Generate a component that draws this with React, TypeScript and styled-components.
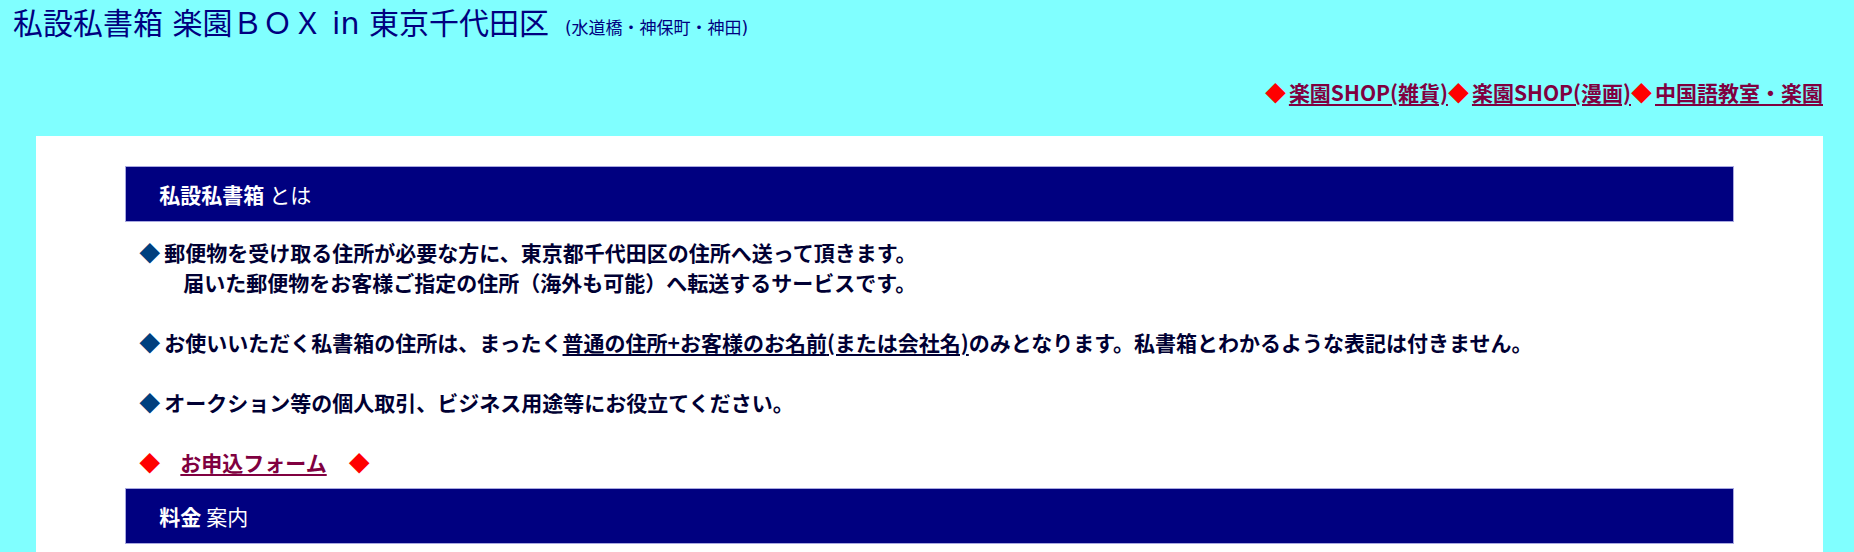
import React from "react";
import styled, { createGlobalStyle } from "styled-components";

const GlobalStyle = createGlobalStyle`
  html, body {
    margin: 0;
    padding: 0;
    background: #80ffff;
  }
  body {
    font-family: "Noto Sans CJK JP", "Noto Sans", sans-serif;
  }
`;

const Page = styled.div`
  width: 1854px;
  padding-top: 2px;
`;

const Title = styled.h1`
  margin: 0;
  padding: 0 0 0 13px;
  height: 44px;
  display: flex;
  align-items: baseline;
  font-family: "DejaVu Sans", "Noto Sans CJK JP", sans-serif;
  font-size: 30px;
  font-weight: 400;
  line-height: 44px;
  color: #000080;
  white-space: nowrap;
`;

const Sub = styled.span`
  font-size: 17px;
  margin-left: 16px;
`;

const Nav = styled.nav`
  display: flex;
  justify-content: flex-end;
  padding: 31px 31px 0 0;
  height: 90px;
  font-size: 21px;
  font-weight: 700;
  line-height: 30px;
  box-sizing: border-box;
  white-space: nowrap;
`;

const RedMark = styled.span<{ $gap?: number }>`
  color: #ff0000;
  font-weight: 700;
  margin-right: ${(p) => p.$gap ?? 0}px;
`;

const NavLink = styled.a`
  color: #800040;
  text-decoration: underline;
  text-underline-offset: 3px;
`;

const Panel = styled.main`
  margin: 0 31px 0 36px;
  background: #ffffff;
  padding: 30px 0 8px;
`;

const Inner = styled.div`
  width: 90%;
  margin: 0 auto;
`;

const Bar = styled.h2`
  margin: 0;
  height: 56px;
  box-sizing: border-box;
  background: #000080;
  border: 1px solid #a8a8e0;
  display: flex;
  align-items: center;
  padding-left: 33px;
  font-size: 21px;
  font-weight: 400;
  color: #ffffff;
`;

const Strong = styled.b`
  font-weight: 700;
  margin-right: 5px;
`;

const Body = styled.div`
  padding: 15px 12px 11px 14px;
  font-size: 21px;
  font-weight: 700;
  line-height: 30px;
  color: #000033;
`;

const Para = styled.p`
  margin: 0 0 30px;
  &:last-child {
    margin-bottom: 0;
  }
`;

const BlueMark = styled.span`
  color: #00407f;
  margin-right: 4px;
`;

const Indent = styled.span`
  display: block;
  padding-left: 44px;
`;

const TextLink = styled.a`
  color: #000033;
  text-decoration: underline;
  text-underline-offset: 3px;
`;

const FormLink = styled.a`
  color: #800040;
  text-decoration: underline;
  text-underline-offset: 3px;
  margin: 0 22px 0 20px;
`;

export default function App() {
  return (
    <Page>
      <GlobalStyle />
      <Title>
        私設私書箱 楽園ＢＯＸ in 東京千代田区
        <Sub>(水道橋・神保町・神田)</Sub>
      </Title>
      <Nav>
        <RedMark $gap={3}>◆</RedMark>
        <NavLink href="#">楽園SHOP(雑貨)</NavLink>
        <RedMark $gap={3}>◆</RedMark>
        <NavLink href="#">楽園SHOP(漫画)</NavLink>
        <RedMark $gap={3}>◆</RedMark>
        <NavLink href="#">中国語教室・楽園</NavLink>
      </Nav>
      <Panel>
        <Inner>
          <Bar>
            <Strong>私設私書箱</Strong>とは
          </Bar>
          <Body>
            <Para>
              <BlueMark>◆</BlueMark>郵便物を受け取る住所が必要な方に、東京都千代田区の住所へ送って頂きます。
              <Indent>届いた郵便物をお客様ご指定の住所（海外も可能）へ転送するサービスです。</Indent>
            </Para>
            <Para>
              <BlueMark>◆</BlueMark>お使いいただく私書箱の住所は、まったく
              <TextLink href="#">普通の住所+お客様のお名前</TextLink>
              <TextLink href="#">(または会社名)</TextLink>
              のみとなります。私書箱とわかるような表記は付きません。
            </Para>
            <Para>
              <BlueMark>◆</BlueMark>オークション等の個人取引、ビジネス用途等にお役立てください。
            </Para>
            <Para>
              <RedMark>◆</RedMark>
              <FormLink href="#">お申込フォーム</FormLink>
              <RedMark>◆</RedMark>
            </Para>
          </Body>
          <Bar>
            <Strong>料金</Strong>案内
          </Bar>
        </Inner>
      </Panel>
    </Page>
  );
}
